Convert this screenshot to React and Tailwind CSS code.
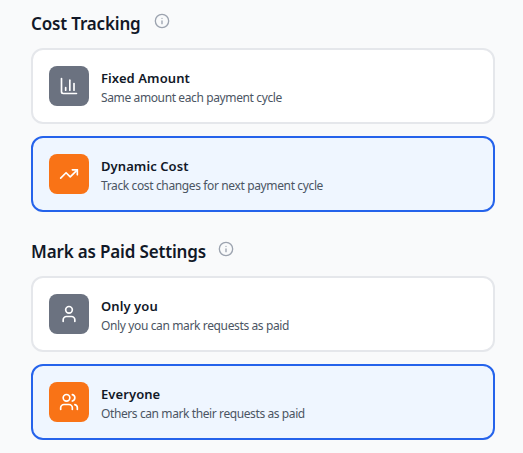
import { ChartColumn, TrendingUp, User, Users, Info } from "lucide-react";

const sections = [
  {
    title: "Cost Tracking",
    gap: "gap-[13px]",
    options: [
      { icon: ChartColumn, title: "Fixed Amount", text: "Same amount each payment cycle", spacing: "tracking-[-0.38px]" },
      { icon: TrendingUp, title: "Dynamic Cost", text: "Track cost changes for next payment cycle", spacing: "tracking-[-0.37px]", active: true },
    ],
  },
  {
    title: "Mark as Paid Settings",
    gap: "gap-3",
    options: [
      { icon: User, title: "Only you", text: "Only you can mark requests as paid", spacing: "tracking-[-0.37px]" },
      { icon: Users, title: "Everyone", text: "Others can mark their requests as paid", spacing: "tracking-[-0.4px]", active: true },
    ],
  },
];

function Option({ icon: Icon, title, text, spacing, active }) {
  return (
    <button
      className={`flex h-[76px] w-full items-center gap-3 rounded-xl border-2 px-4 text-left ${
        active ? "border-[#2563eb] bg-[#eff6ff]" : "border-[#e5e7eb] bg-white"
      }`}
    >
      <span
        className={`flex size-10 shrink-0 items-center justify-center rounded-lg text-white ${
          active ? "bg-[#f97316]" : "bg-[#6b7280]"
        }`}
      >
        <Icon size={20} strokeWidth={2} />
      </span>
      <span className="flex flex-col pt-1 whitespace-nowrap">
        <span className="text-[13px] leading-5 font-semibold tracking-[0.08px] text-[#111827]">{title}</span>
        <span className={`text-[12px] leading-5 text-[#4b5563] ${spacing}`}>{text}</span>
      </span>
    </button>
  );
}

export default function App() {
  return (
    <main className="flex h-[453px] w-[523px] flex-col gap-6 overflow-hidden bg-[#f9fafb] pt-2 pr-7 pl-[31px] font-['Noto_Sans',sans-serif]">
      {sections.map((s) => (
        <section key={s.title}>
          <div className={`flex h-[28px] items-center whitespace-nowrap ${s.gap}`}>
            <h2 className="pt-1 text-[17px] leading-7 font-semibold tracking-[-0.16px] text-[#111827]">{s.title}</h2>
            <Info size={16} className="mb-0.5 text-[#9ca3af]" />
          </div>
          <div className="mt-3 flex flex-col gap-3">
            {s.options.map((o) => (
              <Option key={o.title} {...o} />
            ))}
          </div>
        </section>
      ))}
    </main>
  );
}
